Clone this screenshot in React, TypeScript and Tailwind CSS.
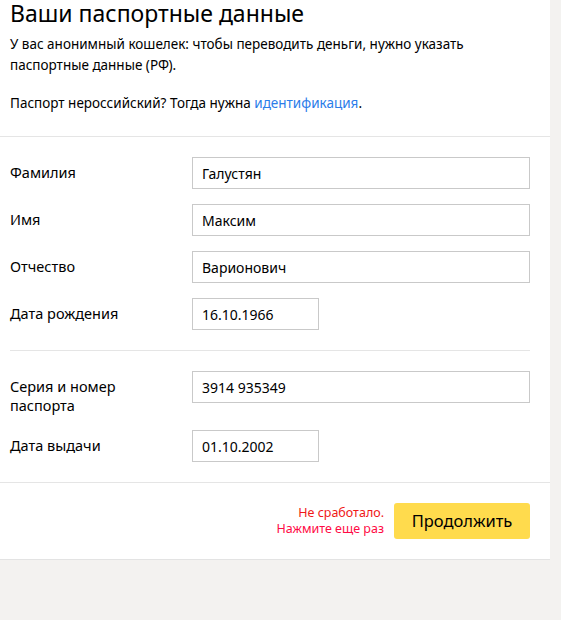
const font = { fontFamily: '"Noto Sans", "Open Sans", sans-serif' }

function Field({ label, value, short }: { label: string; value: string; short?: boolean }) {
  return (
    <div className="flex items-start">
      <div className="w-[182px] shrink-0 pt-[6px] text-[14.5px] leading-[19px] pr-[34px]">{label}</div>
      <div
        className={`h-[32px] border border-[#c9c9c9] px-[9px] flex items-center text-[14px] ${
          short ? 'w-[127px]' : 'w-[338px]'
        }`}
      >
        {value}
      </div>
    </div>
  )
}

export default function App() {
  return (
    <div className="min-h-[620px] bg-[#f3f2f0] text-black" style={font}>
      <div className="w-[550px] bg-white border-b border-[#e3e3e3]">
        <div className="pl-[10px] pr-5 pb-[22px] border-b border-[#e5e5e5]">
          <h1 className="text-[23px] leading-[26px] font-normal">Ваши паспортные данные</h1>
          <p className="mt-[8px] max-w-[460px] text-[13.5px] leading-[21px]">
            У вас анонимный кошелек: чтобы переводить деньги, нужно указать паспортные данные (РФ).
          </p>
          <p className="mt-[17px] text-[13.5px] leading-[21px]">
            Паспорт нероссийский? Тогда нужна <span className="text-[#2b7de9]">идентификация</span>.
          </p>
        </div>

        <div className="pl-[10px] pr-5 pt-[20px] pb-[20px] border-b border-[#e5e5e5]">
          <div className="flex flex-col gap-[15px]">
            <Field label="Фамилия" value="Галустян" />
            <Field label="Имя" value="Максим" />
            <Field label="Отчество" value="Варионович" />
            <Field label="Дата рождения" value="16.10.1966" short />
          </div>
          <div className="my-[20px] h-px bg-[#e5e5e5]" />
          <div className="flex flex-col gap-[15px]">
            <Field label="Серия и номер паспорта" value="3914 935349" />
            <Field label="Дата выдачи" value="01.10.2002" short />
          </div>
        </div>

        <div className="pl-[10px] pr-5 pt-[20px] pb-[20px] flex items-center justify-end gap-[10px]">
          <div className="text-right text-[12.5px] leading-[16px]">
            <div className="text-[#f01818]">Не сработало.</div>
            <div className="text-[#ff0a45]">Нажмите еще раз</div>
          </div>
          <button className="w-[136px] h-[36px] rounded-[3px] bg-[#ffdb4d] text-[16.5px] text-black">
            Продолжить
          </button>
        </div>
      </div>
    </div>
  )
}
